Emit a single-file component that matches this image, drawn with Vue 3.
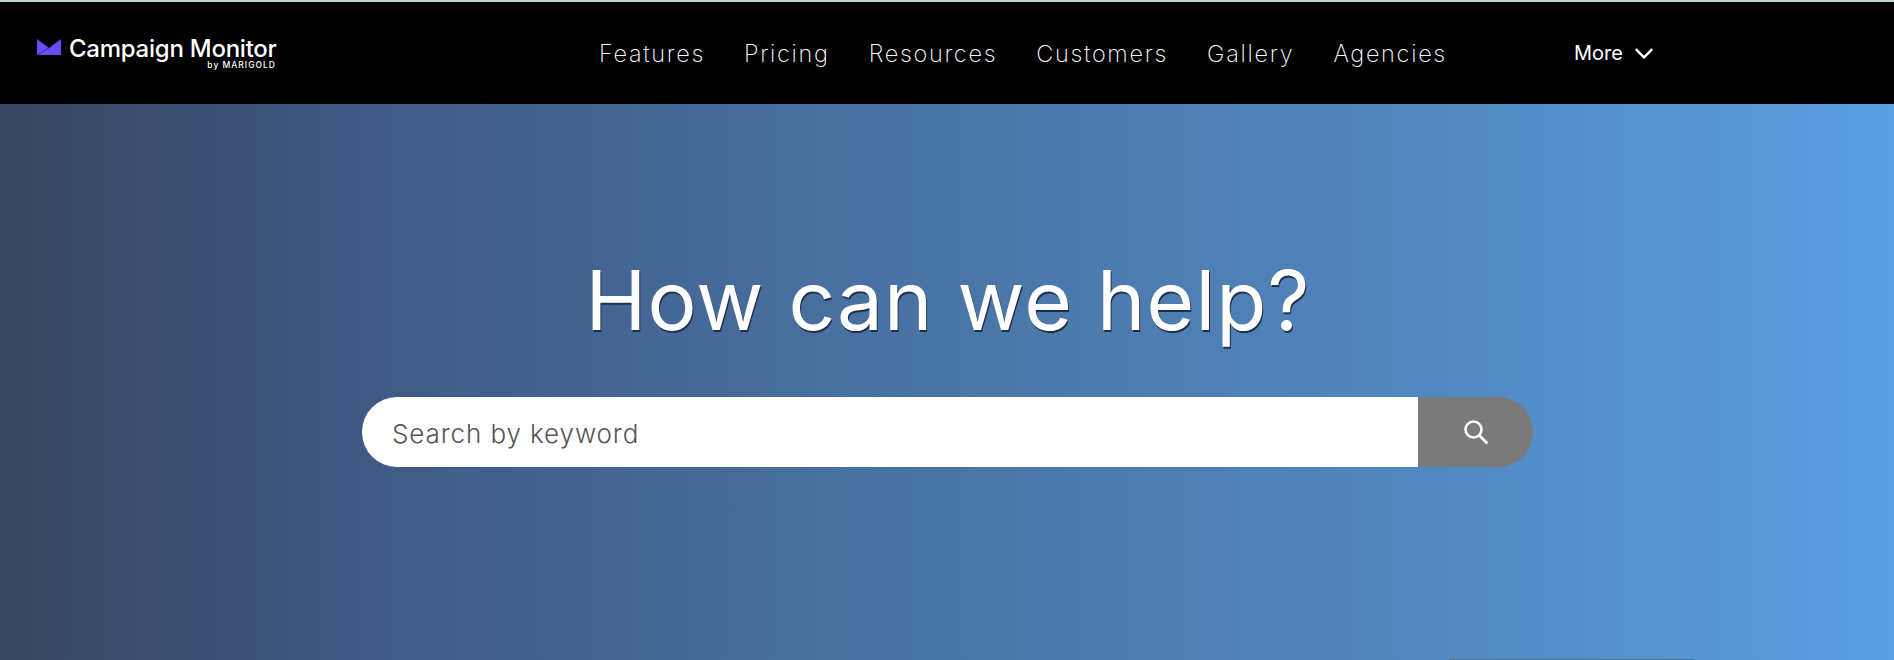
<script setup>
const navLinks = ['Features', 'Pricing', 'Resources', 'Customers', 'Gallery', 'Agencies']
</script>

<template>
  <div class="page">
    <header class="header">
      <a class="logo">
        <svg class="logo-mark" width="24" height="16" viewBox="0 0 24 16">
          <path d="M0 0 L12 9 L24 0 V16 H0 Z" fill="#6a4df5" />
          <path d="M0 16 L12 9" fill="none" stroke="#2e2080" stroke-width="0.8" />
        </svg>
        <div class="logo-text">
          <span class="logo-name">Campaign Monitor</span>
          <span class="logo-sub">by MARIGOLD</span>
        </div>
      </a>
      <nav class="nav">
        <a v-for="link in navLinks" :key="link" class="nav-link">{{ link }}</a>
      </nav>
      <a class="more">
        More
        <svg width="18" height="11" viewBox="0 0 18 11">
          <path d="M0.8 1.2 L9 9.4 L17.2 1.2" fill="none" stroke="#fff" stroke-width="2.4" />
        </svg>
      </a>
    </header>
    <section class="hero">
      <h1 class="title">How can we help?</h1>
      <form class="search" @submit.prevent>
        <input class="search-input" type="text" placeholder="Search by keyword">
        <button class="search-btn" type="submit" aria-label="Search">
          <svg width="26" height="26" viewBox="0 0 26 26">
            <circle cx="10.5" cy="10.5" r="8" fill="none" stroke="#fff" stroke-width="2.6" />
            <path d="M16.4 16.4 L24.4 24.4" fill="none" stroke="#fff" stroke-width="2.8" />
          </svg>
        </button>
      </form>
      <div class="peek"></div>
    </section>
  </div>
</template>

<style>
html, body {
  margin: 0;
  background: #000;
}
</style>

<style scoped>
.page {
  height: 660px;
  display: flex;
  flex-direction: column;
  overflow: hidden;
  font-family: Inter, "Liberation Sans", sans-serif;
}

.header {
  height: 102px;
  flex: none;
  display: flex;
  align-items: center;
  background: #000;
  border-top: 2px solid #bcd3cf;
  padding-left: 37px;
}

.logo {
  width: 562px;
  display: flex;
  align-items: flex-start;
  color: #fff;
  margin-top: 2px;
}

.logo-mark {
  margin-right: 8px;
  margin-top: 1px;
}

.logo-text {
  width: 207px;
  display: flex;
  flex-direction: column;
}

.logo-name {
  font-size: 24px;
  line-height: 20px;
  font-weight: 500;
  letter-spacing: -0.25px;
  white-space: nowrap;
  margin-top: 1px;
}

.logo-sub {
  font-size: 8.5px;
  line-height: 10px;
  margin-top: 1px;
  font-weight: 500;
  text-align: right;
  letter-spacing: 1px;
}

.nav {
  width: 975px;
  display: flex;
  gap: 39px;
}

.nav-link {
  font-size: 23.5px;
  font-weight: 250;
  letter-spacing: 1.7px;
  color: #fff;
  white-space: nowrap;
}

.more {
  display: flex;
  align-items: center;
  gap: 12px;
  color: #fff;
  font-size: 20px;
  font-weight: 400;
}

.hero {
  position: relative;
  flex: 1;
  display: flex;
  flex-direction: column;
  align-items: center;
  background: linear-gradient(90deg, #36455f 0%, #3f5a85 20%, #4a75a6 50%, #5083ba 70%, #5a9fe0 100%);
}

.title {
  margin: 147px 0 0 2px;
  font-size: 82px;
  line-height: 100px;
  font-weight: 400;
  letter-spacing: 1px;
  color: #fff;
  text-shadow: 1px 2px 0 #1f2f4a;
  white-space: nowrap;
}

.search {
  display: flex;
  width: 1171px;
  height: 70px;
  margin: 46px 0 0 1px;
}

.search-input {
  flex: 1;
  border: 0;
  outline: 0;
  padding: 3px 0 0 30px;
  border-radius: 35px 0 0 35px;
  background: #fff;
  font-family: Inter, sans-serif;
  font-size: 26px;
  font-weight: 300;
  letter-spacing: 0.9px;
  color: #555;
}

.search-input::placeholder {
  color: #555;
  opacity: 1;
}

.search-btn {
  width: 115px;
  border: 0;
  padding: 0;
  border-radius: 0 35px 35px 0;
  background: #7a7a7a;
  display: flex;
  align-items: center;
  justify-content: center;
}

.peek {
  position: absolute;
  left: 1449px;
  bottom: 0;
  width: 246px;
  height: 1px;
  background: #4f7396;
}
</style>
